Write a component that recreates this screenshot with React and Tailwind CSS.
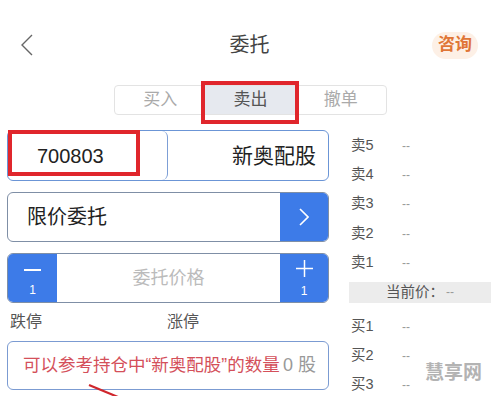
import React from 'react'

const cjk = { fontFamily: '"Liberation Sans", "Noto Sans CJK SC", sans-serif' }

function Row({ label }) {
  return (
    <div className="h-[29.3px] flex items-center text-[14.5px] text-[#555]">
      <span className="w-[62px] pl-[11px]">{label}</span>
      <span className="text-[#999] text-[12px]">--</span>
    </div>
  )
}

export default function App() {
  return (
    <div className="w-[499px] h-[396px] overflow-hidden bg-white relative" style={cjk}>
      {/* header */}
      <header className="h-[85px] pt-[5px] grid grid-cols-[1fr_auto_1fr] items-center px-[20px]">
        <div>
          <svg width="14" height="22" viewBox="0 0 14 22"><polyline points="12,1 2,11 12,21" fill="none" stroke="#666" strokeWidth="1.4"/></svg>
        </div>
        <div className="text-[20px] text-[#444]">委托</div>
        <div className="flex justify-end pr-[1px]">
          <span className="h-[27px] px-[6px] rounded-full bg-[#fdf0e6] text-[#e07636] text-[17px] font-semibold flex items-center">咨询</span>
        </div>
      </header>

      {/* tabs */}
      <div className="relative w-[273px] h-[30px] ml-[114px] flex border border-[#e3e3e3] rounded-[4px] text-[17px]">
        <div className="flex-1 flex items-center justify-center text-[#aaa]">买入</div>
        <div className="flex-1 flex items-center justify-center text-[#555] bg-[#e6e9ef]">卖出</div>
        <div className="flex-1 flex items-center justify-center text-[#aaa]">撤单</div>
        <div className="absolute left-[86px] top-[-5px] w-[98px] h-[43px] border-[4px] border-[#e0262c]" />
      </div>

      <div className="flex mt-[15px]">
        {/* left column */}
        <div className="ml-[7px] w-[322px] flex flex-col">
          <div className="relative h-[51px] flex border border-[#6b95d6] rounded-[6px]">
            <div className="w-[160px] flex items-center pl-[29px] border-r border-[#7d9fd6] rounded-r-[6px] text-[20px] text-[#222]">700803</div>
            <div className="flex-1 flex items-center justify-end pr-[12px] text-[21px] text-[#222]">新奥配股</div>
            <div className="absolute left-[0px] top-[-1px] w-[132px] h-[46px] border-[4px] border-[#e0262c]" />
          </div>

          <div className="mt-[11px] h-[50px] flex border border-[#7f8fa6] rounded-[6px] overflow-hidden">
            <div className="flex-1 flex items-center pl-[19px] text-[20px] text-[#222]">限价委托</div>
            <div className="w-[48px] bg-[#3d7be8] flex items-center justify-center">
              <svg width="10" height="18" viewBox="0 0 10 18"><polyline points="1,1 9,9 1,17" fill="none" stroke="#fff" strokeWidth="1.6"/></svg>
            </div>
          </div>

          <div className="mt-[11px] h-[50px] flex border border-[#7f8fa6] rounded-[6px] overflow-hidden">
            <div className="w-[49px] bg-[#3d7be8] flex flex-col items-center text-white">
              <div className="h-[1.5px] w-[17px] bg-white mt-[15px]" />
              <div className="text-[12px] mt-[13px] leading-none">1</div>
            </div>
            <div className="flex-1 flex items-center justify-center text-[18px] text-[#bbb]">委托价格</div>
            <div className="w-[48px] bg-[#3d7be8] flex flex-col items-center text-white">
              <svg className="mt-[6px]" width="17" height="17" viewBox="0 0 17 17"><path d="M8.5 0V17M0 8.5H17" stroke="#fff" strokeWidth="1.5"/></svg>
              <div className="text-[12px] mt-[8px] leading-none">1</div>
            </div>
          </div>

          <div className="h-[38px] flex items-center text-[16px] text-[#555]">
            <span className="w-[160px] pl-[3px]">跌停</span>
            <span>涨停</span>
          </div>

          <div className="relative h-[49px] flex items-center border border-[#7b9bd2] rounded-[6px]">
            <span className="ml-[15px] text-[17.5px] text-[#d4505a]">可以参考持仓中“新奥配股”的数量</span>
            <span className="ml-auto mr-[12px] text-[18px] text-[#999]">0 股</span>
          </div>
        </div>

        {/* right column */}
        <div className="ml-[11px] w-[159px] pt-[1px] flex flex-col">
          <Row label="卖5" />
          <Row label="卖4" />
          <Row label="卖3" />
          <Row label="卖2" />
          <Row label="卖1" />
          <div className="mt-[4.5px] ml-[9px] w-[142px] h-[21px] bg-[#ececec] flex items-center justify-center text-[14.5px] text-[#555]">
            当前价：<span className="text-[#999] text-[12px] ml-[2px]">--</span>
          </div>
          <div className="mt-[9px]">
            <Row label="买1" />
            <Row label="买2" />
            <Row label="买3" />
          </div>
        </div>
      </div>

      <svg className="absolute left-[88px] top-[383px]" width="40" height="14" viewBox="0 0 40 14"><path d="M1 2 L30 14" stroke="#d0262c" strokeWidth="2.2"/></svg>
      <div className="absolute left-[425px] top-[359px] text-[19px] font-bold text-[#9a9a9a] opacity-75">慧享网</div>
    </div>
  )
}
